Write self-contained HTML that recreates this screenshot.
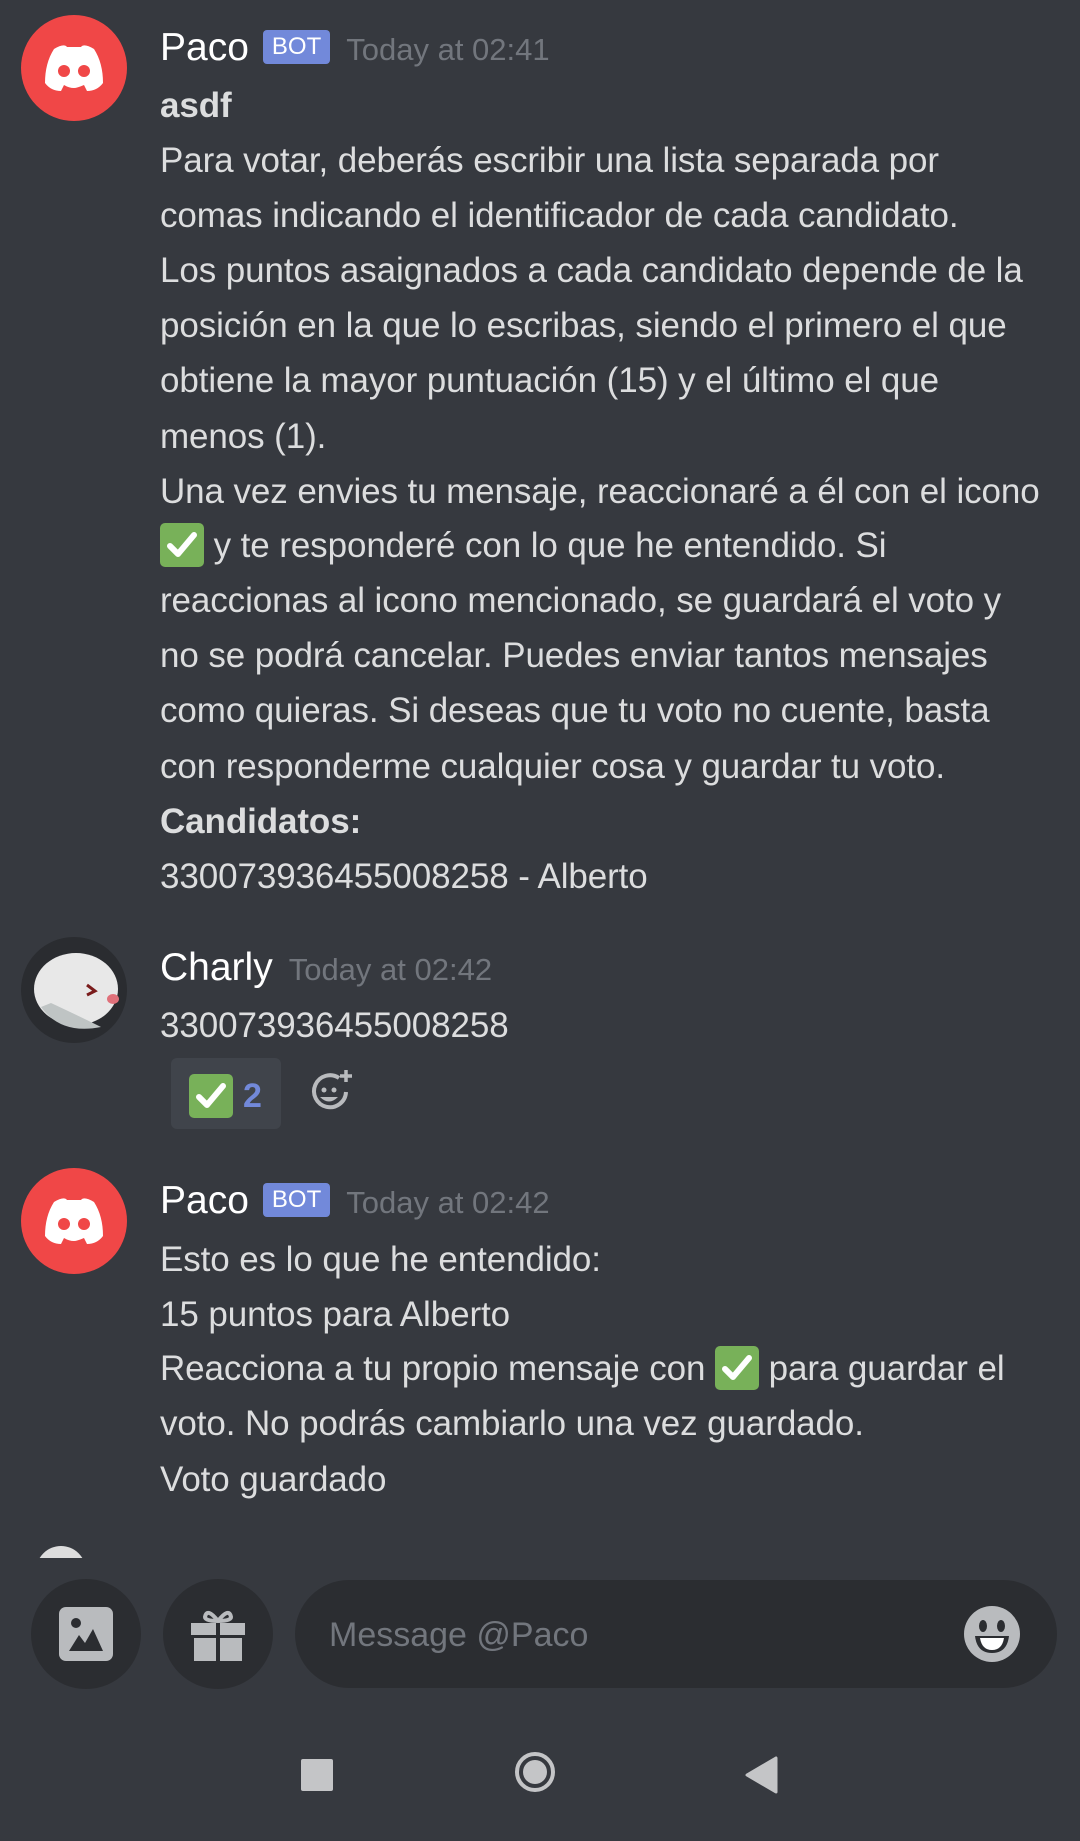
<!DOCTYPE html>
<html><head><meta charset="utf-8"><style>
html,body{margin:0;padding:0}
body{width:1080px;height:1841px;background:#36393f;position:relative;overflow:hidden;font-family:"Liberation Sans",sans-serif}
.l{position:absolute;left:160px;height:56px;line-height:56px;font-size:35px;color:#dcddde;white-space:nowrap;letter-spacing:-0.1px}
.b{font-weight:bold}
.n{position:absolute;left:160px;height:50px;line-height:50px;font-size:39px;color:#fff;white-space:nowrap}
.ts{font-size:31px;color:#72767d;margin-left:16px}
.bot{display:inline-block;background:#7289da;color:#fff;font-size:24px;line-height:34px;height:34px;padding:0 9px;border-radius:4px;vertical-align:middle;margin-left:14px;position:relative;top:-3px}
.ck{display:inline-block;width:44px;height:44px;background:#78b159;border-radius:5px;vertical-align:middle;position:relative;top:-3px}
.ck svg{position:absolute;left:0;top:0}
.av{position:absolute;left:21px;width:106px;height:106px;border-radius:50%;background:#f04747}
</style></head><body>

<div class="av" style="top:15px"><svg width="106" height="106" viewBox="0 0 106 106"><path d="M33 34 Q43 28 46 32 L60 32 Q63 28 73 34 Q82 48 82 68 Q76 76 66 76 L63 70 Q56 73 53 73 Q48 73 43 70 L40 76 Q30 76 24 68 Q24 48 33 34Z" fill="#fff"/><circle cx="43" cy="56" r="6" fill="#f04747"/><circle cx="63" cy="56" r="6" fill="#f04747"/></svg></div>
<div class="n" style="top:23px">Paco<span class="bot">BOT</span><span class="ts">Today at 02:41</span></div>
<div class="l b" style="top:78px">asdf</div>
<div class="l" style="top:133px">Para votar, deberás escribir una lista separada por</div>
<div class="l" style="top:188px">comas indicando el identificador de cada candidato.</div>
<div class="l" style="top:243px">Los puntos asaignados a cada candidato depende de la</div>
<div class="l" style="top:298px">posición en la que lo escribas, siendo el primero el que</div>
<div class="l" style="top:353px">obtiene la mayor puntuación (15) y el último el que</div>
<div class="l" style="top:409px">menos (1).</div>
<div class="l" style="top:464px">Una vez envies tu mensaje, reaccionaré a él con el icono</div>
<div class="l" style="top:518px"><span class="ck"><svg width="44" height="44"><path d="M10 23 L18 31 L34 12" stroke="#fff" stroke-width="6" fill="none" stroke-linecap="round" stroke-linejoin="round"/></svg></span> y te responderé con lo que he entendido. Si</div>
<div class="l" style="top:573px">reaccionas al icono mencionado, se guardará el voto y</div>
<div class="l" style="top:628px">no se podrá cancelar. Puedes enviar tantos mensajes</div>
<div class="l" style="top:683px">como quieras. Si deseas que tu voto no cuente, basta</div>
<div class="l" style="top:739px">con responderme cualquier cosa y guardar tu voto.</div>
<div class="l b" style="top:794px">Candidatos:</div>
<div class="l" style="top:849px">330073936455008258 - Alberto</div>

<div class="av" style="top:937px;background:#2a2c30"><svg width="106" height="106"><ellipse cx="55" cy="52" rx="42" ry="36" fill="#e8e8e8"/><path d="M20 70 Q40 98 80 90 Q60 80 30 66Z" fill="#bfc4c4"/><ellipse cx="92" cy="62" rx="6" ry="5" fill="#e0707a"/><path d="M66 48 L74 54 L66 58" stroke="#7a1c1c" stroke-width="3" fill="none"/></svg></div>
<div class="n" style="top:943px">Charly<span class="ts">Today at 02:42</span></div>
<div class="l" style="top:998px">330073936455008258</div>
<div style="position:absolute;left:171px;top:1058px;width:110px;height:71px;background:#40444b;border-radius:6px"></div>
<div style="position:absolute;left:189px;top:1074px"><span class="ck" style="top:0"><svg width="44" height="44"><path d="M10 23 L18 31 L34 12" stroke="#fff" stroke-width="6" fill="none" stroke-linecap="round" stroke-linejoin="round"/></svg></span></div>
<div style="position:absolute;left:243px;top:1072px;font-size:34px;line-height:48px;color:#7289da;font-weight:bold">2</div>
<svg style="position:absolute;left:308px;top:1068px" width="46" height="46" viewBox="0 0 46 46"><path d="M31 10 A16 16 0 1 0 38 24" stroke="#b9bbbe" stroke-width="4" fill="none"/><circle cx="16" cy="22" r="2.5" fill="#b9bbbe"/><circle cx="26" cy="22" r="2.5" fill="#b9bbbe"/><path d="M12 29 Q21 38 30 29Z" fill="#b9bbbe"/><path d="M38 2 V14 M32 8 H44" stroke="#b9bbbe" stroke-width="3.5"/></svg>

<div class="av" style="top:1168px"><svg width="106" height="106" viewBox="0 0 106 106"><path d="M33 34 Q43 28 46 32 L60 32 Q63 28 73 34 Q82 48 82 68 Q76 76 66 76 L63 70 Q56 73 53 73 Q48 73 43 70 L40 76 Q30 76 24 68 Q24 48 33 34Z" fill="#fff"/><circle cx="43" cy="56" r="6" fill="#f04747"/><circle cx="63" cy="56" r="6" fill="#f04747"/></svg></div>
<div class="n" style="top:1176px">Paco<span class="bot">BOT</span><span class="ts">Today at 02:42</span></div>
<div class="l" style="top:1232px">Esto es lo que he entendido:</div>
<div class="l" style="top:1287px">15 puntos para Alberto</div>
<div class="l" style="top:1341px">Reacciona a tu propio mensaje con <span class="ck"><svg width="44" height="44"><path d="M10 23 L18 31 L34 12" stroke="#fff" stroke-width="6" fill="none" stroke-linecap="round" stroke-linejoin="round"/></svg></span> para guardar el</div>
<div class="l" style="top:1396px">voto. No podrás cambiarlo una vez guardado.</div>
<div class="l" style="top:1452px">Voto guardado</div>

<div style="position:absolute;left:36px;top:1546px;width:50px;height:12px;overflow:hidden"><div style="width:50px;height:50px;border-radius:50%;background:#ddd"></div></div>

<div style="position:absolute;left:31px;top:1579px;width:110px;height:110px;border-radius:50%;background:#2b2d31"></div>
<svg style="position:absolute;left:59px;top:1607px" width="54" height="54" viewBox="0 0 54 54"><rect x="0" y="0" width="54" height="54" rx="7" fill="#b9bbbe"/><circle cx="17" cy="16" r="5" fill="#2b2d31"/><path d="M10 44 L20 28 L26 36 L34 22 L44 44Z" fill="#2b2d31"/></svg>
<div style="position:absolute;left:163px;top:1579px;width:110px;height:110px;border-radius:50%;background:#2b2d31"></div>
<svg style="position:absolute;left:191px;top:1607px" width="54" height="54" viewBox="0 0 54 54"><rect x="0" y="16" width="54" height="12" fill="#b9bbbe"/><rect x="3" y="31" width="22" height="23" fill="#b9bbbe"/><rect x="29" y="31" width="22" height="23" fill="#b9bbbe"/><rect x="25" y="16" width="4" height="38" fill="#2b2d31"/><path d="M27 14 Q16 0 14 10 Q14 14 27 14 Q40 14 40 10 Q38 0 27 14" stroke="#b9bbbe" stroke-width="4" fill="none"/></svg>
<div style="position:absolute;left:295px;top:1580px;width:762px;height:108px;border-radius:54px;background:#2b2d31"></div>
<div style="position:absolute;left:329px;top:1610px;font-size:34px;line-height:50px;color:#72767d">Message @Paco</div>
<svg style="position:absolute;left:964px;top:1606px" width="56" height="56" viewBox="0 0 56 56"><circle cx="28" cy="28" r="28" fill="#b9bbbe"/><ellipse cx="19" cy="20" rx="4" ry="6" fill="#2b2d31"/><ellipse cx="37" cy="20" rx="4" ry="6" fill="#2b2d31"/><path d="M11 30 H45 Q43 47 28 47 Q13 47 11 30Z" fill="#2b2d31"/><path d="M16 32 H40 Q38 44 28 44 Q18 44 16 32Z" fill="#fff"/></svg>

<div style="position:absolute;left:301px;top:1759px;width:32px;height:32px;background:#c4c5c7;border-radius:2px"></div>
<div style="position:absolute;left:515px;top:1752px;width:40px;height:40px;border-radius:50%;border:4px solid #c4c5c7;box-sizing:border-box"></div>
<div style="position:absolute;left:523px;top:1760px;width:24px;height:24px;border-radius:50%;background:#c4c5c7"></div>
<svg style="position:absolute;left:744px;top:1756px" width="34" height="38"><path d="M32 2 V36 L3 19Z" fill="#c4c5c7" stroke="#c4c5c7" stroke-width="3" stroke-linejoin="round"/></svg>
</body></html>
